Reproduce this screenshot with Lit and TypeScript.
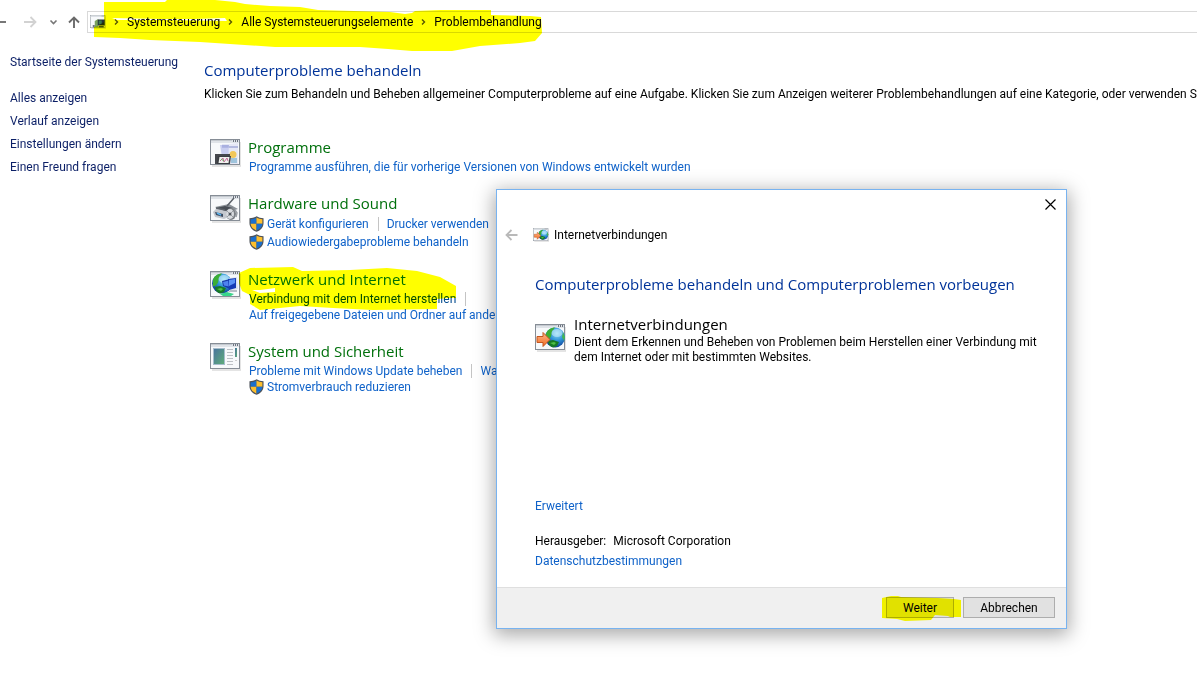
import { LitElement, html, svg, css, nothing } from "lit";
import { customElement, property } from "lit/decorators.js";

const frame = svg`
  <path d="M2 27h29V3" fill="none" stroke="#dcdcdc" stroke-width="1.5"/>
  <rect x=".5" y=".5" width="29" height="25" fill="#f7f9fb" stroke="#868d96"/>
  <rect x="1" y="1" width="28" height="3" fill="#dfe3e8"/>
  <path d="M1 1.500h21" stroke="#c4c9cf"/>
  <path d="M23 2h1M25 2h1M27 2h1" stroke="#49515e" stroke-width="1.500"/>`;

const globe = svg`
  <circle cx="20" cy="13.500" r="10" fill="url(#sea)"/>
  <path d="M11 10c1-4 5-6.500 9-6.500l-3 4-1 5-2 3-3 1z" fill="#3cae35"/>
  <path d="M13 17l5-1 6 2-2 4-4 1.500c-3-1-5-3-5-6.500z" fill="#177a25"/>
  <path d="M15 19l4-1 2 1-2 2z" fill="#4fbf45"/>
  <path d="M28 8l2 5-1 4-2-4z" fill="#46b653"/>
  <ellipse cx="22" cy="9" rx="5.500" ry="4" fill="#d9f3ff" opacity=".5"/>`;

const defs = svg`<defs>
  <radialGradient id="sea" cx=".6" cy=".3" r=".75">
    <stop offset="0" stop-color="#8fdcf7"/><stop offset=".5" stop-color="#2b8fd6"/><stop offset="1" stop-color="#0b2f8c"/>
  </radialGradient>
  <linearGradient id="arrow" x1="0" y1="0" x2="0" y2="1">
    <stop offset="0" stop-color="#ffb88a"/><stop offset="1" stop-color="#f26a22"/>
  </linearGradient>
  <linearGradient id="pane" x1="0" y1="0" x2="1" y2="1">
    <stop offset="0" stop-color="#47729e"/><stop offset="1" stop-color="#5fae78"/>
  </linearGradient></defs>`;

const art: Record<string, unknown> = {
  programs: svg`${frame}
    <path d="M10 6h12v18h-9z" fill="#c9cef0"/>
    <path d="M12 8h16M12 6.500h9" stroke="#a9b0e0" stroke-width="1.500"/>
    <path d="M19 5l9-1v21H18z" fill="#e6e8f6"/>
    <path d="M19 8h9" stroke="#b4badf" stroke-width="2"/>
    <circle cx="23" cy="15.500" r="3.500" fill="#f1c75a"/>
    <path d="M21 19h6v5h-6z" fill="#9fc4dc"/>
    <path d="M5 15h15v3H8v7H5z" fill="#45484d"/>
    <path d="M8 17h13l-1 8H7z" fill="#3b3e43"/>
    <path d="M9.500 18h10l-1 6h-10z" fill="#f0f1ee"/>
    <path d="M10 22l3-3 1 4 3-4 1 3" stroke="#c46f9c" fill="none"/>
    <path d="M11 20l3 2" stroke="#6ba762"/>`,
  hardware: svg`${frame}
    <path d="M5 12l14-3 9 5-13 4z" fill="#8a9097"/>
    <path d="M3 17l4-4 14 3v5l-7 3-9-2z" fill="#c4c8ce"/>
    <path d="M6 13l9-2 8 2-7 3z" fill="#474d55"/>
    <path d="M17 11l7-8M6 13l9 2" stroke="#5b6169" stroke-width="1.500"/>
    <ellipse cx="21" cy="19" rx="5" ry="6" fill="#7b8086"/>
    <ellipse cx="20" cy="19" rx="4" ry="5" fill="#d8dbdf"/>
    <path d="M17 16l6 6M23 16l-6 6" stroke="#9a9fa5"/>
    <circle cx="20" cy="19" r="1.500" fill="#50565d"/>
    <path d="M5 17l8 2v3l-7-2z" fill="#3c4c62"/>
    <path d="M7 18l4 2" stroke="#5fb8f0" stroke-width="1.500"/>
    <path d="M25 15l2 3-1 4" stroke="#9a9fa5" fill="none" stroke-width="1.500"/>`,
  network: svg`${frame}
    <g transform="translate(-8 -1)">${globe}</g>
    <path d="M10 23l7-2 7 2-3 2h-8z" fill="#39d68a"/>
    <path d="M12 10l8-2v10l-7-3z" fill="#1839a8"/>
    <path d="M13 11l6-1.500v6l-5-1z" fill="#4f83f0"/>
    <path d="M19 7l8-1 1 12-8 2z" fill="#dbe3ee"/>
    <path d="M18 8l8-1v10l-7 2z" fill="#163bb5"/>
    <path d="M19 9l6-1v4l-6 3z" fill="#5b93f5"/>
    <path d="M20 19h7v2h-9z" fill="#b6bdc6"/>`,
  system: svg`${frame}
    <rect x="3.500" y="5.500" width="11" height="16" fill="url(#pane)" stroke="#a5bccd"/>
    <path d="M17 6.500h6M17 9.500h6M17 12.500h6M17 15.500h6M17 18.500h6M17 21.500h6" stroke="#bcc0c5"/>
    <rect x="25" y="5" width="2" height="9" fill="url(#pane)"/>
    <path d="M25 17.500h2" stroke="#ccc"/>`,
  connection: svg`${frame}${globe}
    <path d="M2 12.500h6V8.500l7 7-7 7v-4H2z" fill="url(#arrow)" stroke="#c4561f"/>`,
  panel: svg`${frame}
    <path d="M9 12l7-4v17H9z" fill="#7aa35e"/>
    <path d="M15 9h14v12H15z" fill="#26323c"/>
    <path d="M17 11h6v6l-6 2z" fill="#3c7b52"/>
    <path d="M17 22h10v3H17z" fill="#4b565e"/>
    <path d="M5 20h4v5H5z" fill="#6d7780"/>`,
};

const picture = (name: string, cls = "picture") =>
  html`<svg class=${cls} viewBox="0 0 31 28" aria-hidden="true">${defs}${art[name]}</svg>`;

const shield = html`<svg class="shield" viewBox="0 0 14 15" aria-hidden="true">
  <path d="M7 .3C5 1.500 3 2 .4 2v4.500C.4 10.500 3 13.300 7 14.800c4-1.500 6.600-4.300 6.600-8.300V2C11 2 9 1.500 7 .3z" fill="#4d5259"/>
  <path d="M7 1.500C5.300 2.500 3.600 3 1.500 3v4.300H7z" fill="#1a6fce"/>
  <path d="M7 1.500C8.700 2.500 10.400 3 12.500 3v4.300H7z" fill="#fdbf2d"/>
  <path d="M1.500 7.300H7v6.300c-3.300-1.300-5.300-3.300-5.500-6.300z" fill="#fdbf2d"/>
  <path d="M12.500 7.300H7v6.300c3.300-1.300 5.300-3.300 5.500-6.300z" fill="#1a6fce"/>
</svg>`;

const shared = css`
  * { box-sizing: border-box; }
  a { color: #0f62c9; text-decoration: none; white-space: nowrap; }
  a:hover { text-decoration: underline; }
  h1, h2, p { margin: 0; font-weight: 400; }
  h1, h2 { font-family: "Open Sans", "Noto Sans", sans-serif; font-size: 15px; line-height: 20px; white-space: nowrap; }
  h1 { color: #003399; }
  button { font: inherit; color: inherit; padding: 0; border: 0; background: none; }
  svg { display: block; flex: none; }
  .picture { width: 31px; height: 28px; }
  .small { width: 16px; height: 14px; }
  .marker { position: absolute; mix-blend-mode: multiply; pointer-events: none; fill: #ffff00; }
`;

type Task = { label: string; shield?: boolean; visited?: boolean };
type Category = { icon: string; title: string; rows: Task[][]; marked?: boolean };

const categories: Category[] = [
  { icon: "programs", title: "Programme", rows: [[{ label: "Programme ausführen, die für vorherige Versionen von Windows entwickelt wurden" }]] },
  {
    icon: "hardware", title: "Hardware und Sound", rows: [
      [{ label: "Gerät konfigurieren", shield: true }, { label: "Drucker verwenden" }],
      [{ label: "Audiowiedergabeprobleme behandeln", shield: true }],
    ],
  },
  {
    icon: "network", title: "Netzwerk und Internet", marked: true, rows: [
      [{ label: "Verbindung mit dem Internet herstellen", visited: true }, { label: "" }],
      [{ label: "Auf freigegebene Dateien und Ordner auf anderen" }],
    ],
  },
  {
    icon: "system", title: "System und Sicherheit", rows: [
      [{ label: "Probleme mit Windows Update beheben" }, { label: "Wartung" }],
      [{ label: "Stromverbrauch reduzieren", shield: true }],
    ],
  },
];

@customElement("task-category")
class TaskCategory extends LitElement {
  @property({ attribute: false }) data!: Category;

  static styles = [shared, css`
    :host { display: flex; gap: 7px; position: relative; }
    .picture { margin-top: 2px; }
    h2 { margin-bottom: 2px; }
    h2 a { color: #00700c; }
    .row { display: flex; align-items: center; height: 16px; padding-left: 1px; }
    .tall { height: 18px; }
    .task { display: flex; align-items: center; gap: 3px; line-height: 16px; }
    .task + .task { border-left: 1px solid #c4c4c4; margin-left: 9px; padding-left: 8px; min-height: 14px; line-height: 14px; }
    .shield { width: 15px; height: 16px; }
    .visited { color: #004a8f; }
    .marker { left: 28px; top: -4px; width: 222px; height: 46px; }
  `];

  render() {
    const { icon, title, rows, marked } = this.data;
    const tall = rows.length > 1 && rows.every(r => r[0].shield);
    return html`${picture(icon)}
      <div>
        <h2><a href="#">${title}</a></h2>
        ${rows.map(row => html`<div class="row ${tall ? "tall" : ""}">
          ${row.map(t => html`<span class="task">${t.shield ? shield : nothing}${t.label
            ? html`<a href="#" class=${t.visited ? "visited" : ""}>${t.label}</a>` : nothing}</span>`)}
        </div>`)}
      </div>
      ${marked ? html`<svg class="marker" viewBox="238 265 222 46" aria-hidden="true">
        <path fill-rule="evenodd" d="M239 273l11-5 43-1 9 4 48-1 37-2 30 3 23 6 16 9v12h-6l-13 1v10l-64 1-40-2-33-2-40 4-10-6v-9l-8-4-3-8zM252 290l8 3 15-1v-4l-7 1-8 1z"/>
      </svg>` : nothing}`;
  }
}

@customElement("troubleshoot-dialog")
class TroubleshootDialog extends LitElement {
  static styles = [shared, css`
    :host { display: flex; flex-direction: column; background: #fff; border: 1px solid #78b3f0;
      box-shadow: 0 4px 18px 2px rgba(0, 0, 0, .34); }
    .top { display: flex; justify-content: flex-end; height: 30px; }
    .close { display: grid; place-items: center; width: 31px; height: 28px; }
    .title { display: flex; align-items: center; height: 30px; padding-left: 8px; }
    .back { display: flex; width: 28px; }
    .name { margin-left: 5px; }
    .body { flex: 1; display: flex; flex-direction: column; padding: 24px 24px 16px 38px; }
    .entry { display: flex; gap: 8px; margin-top: 20px; }
    .entry .picture { margin-top: 10px; }
    .entry p { margin-top: 1px; line-height: 15px; }
    .info { margin-top: auto; line-height: 20px; }
    .publisher { margin-top: 15px; }
    .publisher span { margin-left: 7px; }
    footer { display: flex; justify-content: flex-end; gap: 9px; height: 41px; padding: 9px 11px;
      background: #f0f0f0; border-top: 1px solid #dfdfdf; }
    .wrap { position: relative; display: flex; }
    .action { width: 92px; height: 21px; background: #e1e1e1; border: 1px solid #adadad; }
    .next { width: 68px; }
    .marker { left: -5px; top: -2px; width: 81px; height: 26px; }
  `];

  render() {
    return html`
      <div class="top"><button class="close" aria-label="Schließen">
        <svg width="11" height="11" viewBox="0 0 11 11"><path d="M.5.5l10 10M10.500.5l-10 10" stroke="#000" stroke-width="1.200"/></svg>
      </button></div>
      <div class="title">
        <button class="back" aria-label="Zurück">
          <svg width="13" height="12" viewBox="0 0 13 12"><path d="M12.500 6H1.500M6.500 1l-5 5 5 5" fill="none" stroke="#b9b9b9" stroke-width="1.800"/></svg>
        </button>
        ${picture("connection", "small")}<span class="name">Internetverbindungen</span>
      </div>
      <div class="body">
        <h1>Computerprobleme behandeln und Computerproblemen vorbeugen</h1>
        <div class="entry">${picture("connection")}
          <div><h2>Internetverbindungen</h2>
            <p>Dient dem Erkennen und Beheben von Problemen beim Herstellen einer Verbindung mit dem Internet oder mit bestimmten Websites.</p></div>
        </div>
        <div class="info">
          <a href="#">Erweitert</a>
          <p class="publisher">Herausgeber:<span>Microsoft Corporation</span></p>
          <a href="#">Datenschutzbestimmungen</a>
        </div>
      </div>
      <footer>
        <div class="wrap"><button class="action next">Weiter</button>
          <svg class="marker" viewBox="881 595 81 26" aria-hidden="true">
            <path d="M882 598l9-2h7l3 1 37 1 16 1 7 1v17h-11l-2-1-13-1-4 5-26 1-8-2-15-1z"/></svg></div>
        <button class="action">Abbrechen</button>
      </footer>`;
  }
}

@customElement("app-root")
class AppRoot extends LitElement {
  static styles = [shared, css`
    :host { display: block; position: relative; isolation: isolate; min-height: 100vh; overflow: hidden;
      background: #fff; color: #000; font: 12px/16px Roboto, "Open Sans", sans-serif; }
    header { display: flex; align-items: center; height: 43px; position: relative; }
    .nav { display: flex; align-items: center; width: 87px; }
    .crumbs { flex: 1; display: flex; align-items: center; height: 22px; padding-left: 2px;
      border: 1px solid #d9d9d9; border-right: 0; }
    .crumbs a { color: #000; }
    .chevron { margin: 0 8px; }
    header .marker { left: 92px; top: 0; width: 452px; height: 52px; }
    .page { display: flex; padding-top: 10px; }
    aside { flex: none; width: 204px; padding-left: 10px; display: flex; flex-direction: column; line-height: 23px; }
    aside a { color: #0b1f66; }
    aside .home { margin-bottom: 16px; line-height: 18px; }
    main { flex: 1; min-width: 0; padding-top: 7px; }
    .lead { white-space: nowrap; margin-top: 6px; }
    .list { display: flex; flex-direction: column; gap: 18px; margin: 35px 0 0 6px; }
    troubleshoot-dialog { position: absolute; left: 496px; top: 189px; width: 571px; height: 440px; }
  `];

  render() {
    const chevron = html`<svg class="chevron" width="5" height="8" viewBox="0 0 5 8" aria-hidden="true"><path d="M1 1.500L3.500 4 1 6.500" fill="none" stroke="#555" stroke-width="1.400"/></svg>`;
    return html`
      <header>
        <div class="nav">
          <svg width="87" height="20" viewBox="0 0 87 20" aria-hidden="true" fill="none">
            <path d="M0 10h6" stroke="#777" stroke-width="2"/>
            <path d="M24 10h11M30.500 5l5 5-5 5" stroke="#d2d2d2" stroke-width="1.800"/>
            <path d="M50.500 8.500l3 3 3-3" stroke="#777" stroke-width="1.600"/>
            <path d="M74 16V5.500M69 10.500l5-5 5 5" stroke="#6a6a6a" stroke-width="1.900"/>
          </svg>
        </div>
        <nav class="crumbs">
          ${picture("panel", "small")}
          ${["Systemsteuerung", "Alle Systemsteuerungselemente", "Problembehandlung"].map(c => html`${chevron}<a href="#">${c}</a>`)}
        </nav>
        <svg class="marker" viewBox="92 0 452 52" aria-hidden="true">
          <path fill-rule="evenodd" d="M104 2h61l2-2h48l20 2 10 2 25 2 30 1 18 3 72 2 15 2 7-1 3-2 25-1h51v5l39 1 11 1 1 16-7 8-15 2-40 3-28 5h-40l-24-2-28-2h-85l-75-5-50-2-30-2-26-1V27l4-1 6-4zM112 18l48 1h35l30-1 2 3-60-1h-50z"/>
        </svg>
      </header>
      <div class="page">
        <aside>
          <a class="home" href="#">Startseite der Systemsteuerung</a>
          <a href="#">Alles anzeigen</a>
          <a href="#">Verlauf anzeigen</a>
          <a href="#">Einstellungen ändern</a>
          <a href="#">Einen Freund fragen</a>
        </aside>
        <main>
          <h1>Computerprobleme behandeln</h1>
          <p class="lead">Klicken Sie zum Behandeln und Beheben allgemeiner Computerprobleme auf eine Aufgabe. Klicken Sie zum Anzeigen weiterer Problembehandlungen auf eine Kategorie, oder verwenden Sie</p>
          <div class="list">${categories.map(c => html`<task-category .data=${c}></task-category>`)}</div>
        </main>
      </div>
      <troubleshoot-dialog role="dialog" aria-label="Internetverbindungen"></troubleshoot-dialog>`;
  }
}
